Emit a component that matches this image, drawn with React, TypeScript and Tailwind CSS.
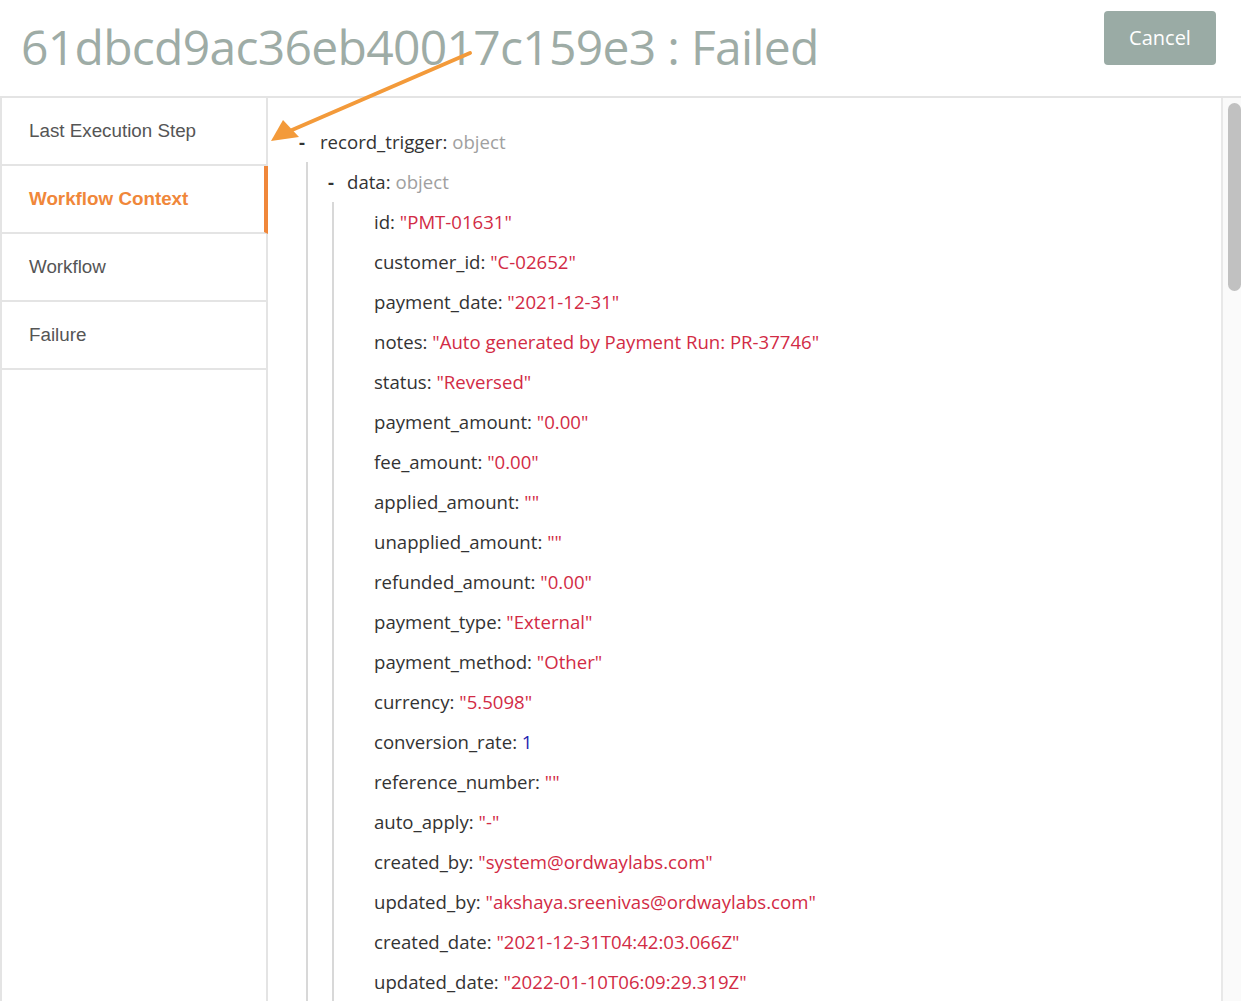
import React from "react";

type Row = { k: string; v: string; t?: "str" | "num" };

const rows: Row[] = [
  { k: "id", v: '"PMT-01631"' },
  { k: "customer_id", v: '"C-02652"' },
  { k: "payment_date", v: '"2021-12-31"' },
  { k: "notes", v: '"Auto generated by Payment Run: PR-37746"' },
  { k: "status", v: '"Reversed"' },
  { k: "payment_amount", v: '"0.00"' },
  { k: "fee_amount", v: '"0.00"' },
  { k: "applied_amount", v: '""' },
  { k: "unapplied_amount", v: '""' },
  { k: "refunded_amount", v: '"0.00"' },
  { k: "payment_type", v: '"External"' },
  { k: "payment_method", v: '"Other"' },
  { k: "currency", v: '"5.5098"' },
  { k: "conversion_rate", v: "1", t: "num" },
  { k: "reference_number", v: '""' },
  { k: "auto_apply", v: '"-"' },
  { k: "created_by", v: '"system@ordwaylabs.com"' },
  { k: "updated_by", v: '"akshaya.sreenivas@ordwaylabs.com"' },
  { k: "created_date", v: '"2021-12-31T04:42:03.066Z"' },
  { k: "updated_date", v: '"2022-01-10T06:09:29.319Z"' },
];

const tabs = ["Last Execution Step", "Workflow Context", "Workflow", "Failure"];

export default function App() {
  return (
    <div
      className="relative h-[1001px] w-[1241px] overflow-hidden bg-white"
      style={{ fontFamily: '"Open Sans", sans-serif' }}
    >
      <div className="flex h-[96px] items-start justify-between">
        <h1 className="pl-[21px] pt-[17px] text-[48px] leading-[60px] font-normal tracking-[-0.7px] text-[#9eaca6]">
          61dbcd9ac36eb40017c159e3 : Failed
        </h1>
        <button className="mr-[25px] mt-[11px] h-[54px] w-[112px] rounded-[4px] bg-[#9aaba5] text-[20px] text-white">
          Cancel
        </button>
      </div>
      <div className="flex h-[905px] border-t-2 border-[#e4e4e4]">
        <div className="w-[268px] shrink-0 border-r-2 border-l-2 border-[#e4e4e4]">
          {tabs.map((t, i) => (
            <div
              key={t}
              className={
                "flex h-[68px] items-center border-b-2 border-[#e4e4e4] pl-[27px] text-[18.8px] " +
                (i === 1
                  ? "mr-[-2px] border-r-4 border-r-[#f0873a] font-bold text-[#f0873a]"
                  : "text-[#555555]")
              }
              style={{ fontFamily: '"Liberation Sans", Arial, sans-serif' }}
            >
              {t}
            </div>
          ))}
        </div>
        <div className="flex-1 pt-[24px] text-[18.6px] text-[#333333]">
          <div className="flex h-[40px] items-center pl-[31px]">
            <span className="w-[21px] font-bold">-</span>
            <span>record_trigger:</span>
            <span className="ml-[5px] text-[#a0a0a0]">object</span>
          </div>
          <div className="ml-[38px] border-l-2 border-[#d8d8d8] pl-[20px]">
            <div className="flex h-[40px] items-center">
              <span className="w-[19px] font-bold">-</span>
              <span>data:</span>
              <span className="ml-[5px] text-[#a0a0a0]">object</span>
            </div>
            <div className="ml-[4px] border-l-2 border-[#d8d8d8] pl-[40px]">
              {rows.map((r) => (
                <div key={r.k} className="flex h-[40px] items-center whitespace-pre">
                  <span>{r.k}: </span>
                  <span className={r.t === "num" ? "text-[#2323b0]" : "text-[#d22b45]"}>{r.v}</span>
                </div>
              ))}
            </div>
          </div>
        </div>
        <div className="w-[20px] shrink-0 border-l-2 border-[#e8e8e8] bg-[#fafafa] pl-[5px] pt-[5px]">
          <div className="h-[188px] w-[13px] rounded-[7px] bg-[#c1c1c1]" />
        </div>
      </div>
      <svg
        className="pointer-events-none absolute left-0 top-0"
        width="1241"
        height="1001"
      >
        <line x1="470" y1="53" x2="292" y2="130" stroke="#f39a3a" strokeWidth="4" strokeLinecap="round" />
        <polygon points="271,141 283,120 299,137" fill="#f39a3a" />
      </svg>
    </div>
  );
}
